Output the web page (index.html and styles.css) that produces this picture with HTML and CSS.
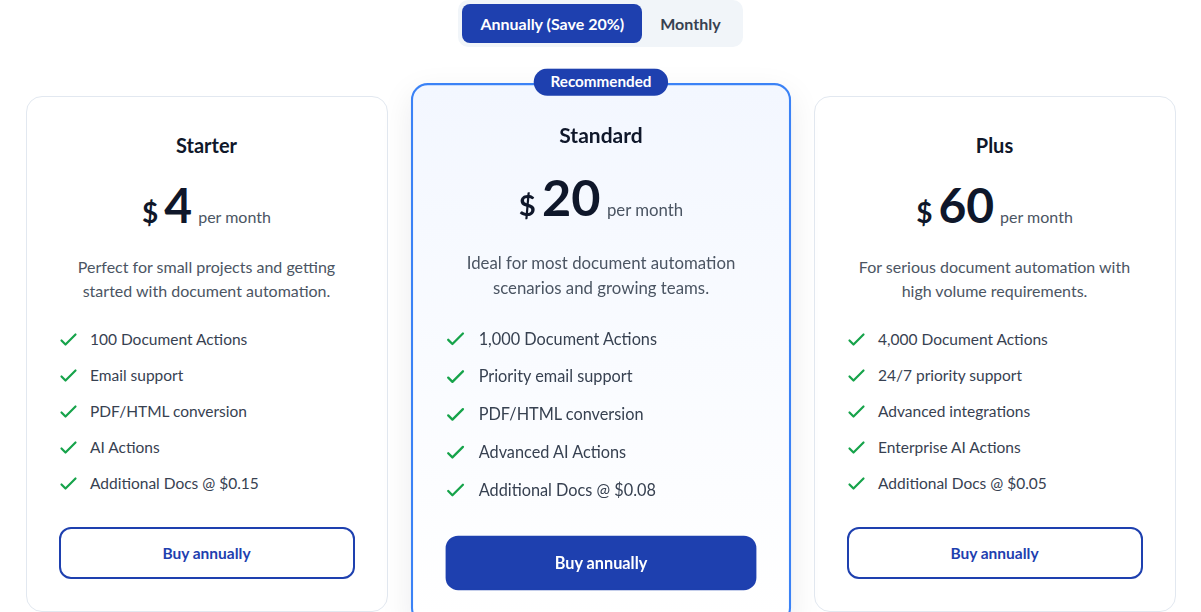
FILE: index.html
```html
<!DOCTYPE html>
<html lang="en">
<head>
<meta charset="utf-8">
<title>Pricing</title>
<link rel="stylesheet" href="styles.css">
</head>
<body>
<main class="page">
  <div class="toggle-wrap">
    <div class="toggle">
      <button class="toggle-btn is-active">Annually (Save 20%)</button>
      <button class="toggle-btn">Monthly</button>
    </div>
  </div>

  <section class="plans">
    <article class="card">
      <h3 class="plan-name">Starter</h3>
      <div class="price">
        <span class="currency">$</span>
        <span class="amount">4</span>
        <span class="period">per month</span>
      </div>
      <p class="desc">Perfect for small projects and getting started with document automation.</p>
      <ul class="features">
        <li><svg class="check" viewBox="4.5 6.5 15 11"><path d="M5 13l4 4L19 7"/></svg>100 Document Actions</li>
        <li><svg class="check" viewBox="4.5 6.5 15 11"><path d="M5 13l4 4L19 7"/></svg>Email support</li>
        <li><svg class="check" viewBox="4.5 6.5 15 11"><path d="M5 13l4 4L19 7"/></svg>PDF/HTML conversion</li>
        <li><svg class="check" viewBox="4.5 6.5 15 11"><path d="M5 13l4 4L19 7"/></svg>AI Actions</li>
        <li><svg class="check" viewBox="4.5 6.5 15 11"><path d="M5 13l4 4L19 7"/></svg>Additional Docs @ $0.15</li>
      </ul>
      <button class="buy">Buy annually</button>
    </article>

    <article class="card card-featured">
      <span class="badge">Recommended</span>
      <h3 class="plan-name">Standard</h3>
      <div class="price">
        <span class="currency">$</span>
        <span class="amount">20</span>
        <span class="period">per month</span>
      </div>
      <p class="desc">Ideal for most document automation scenarios and growing teams.</p>
      <ul class="features">
        <li><svg class="check" viewBox="4.5 6.5 15 11"><path d="M5 13l4 4L19 7"/></svg>1,000 Document Actions</li>
        <li><svg class="check" viewBox="4.5 6.5 15 11"><path d="M5 13l4 4L19 7"/></svg>Priority email support</li>
        <li><svg class="check" viewBox="4.5 6.5 15 11"><path d="M5 13l4 4L19 7"/></svg>PDF/HTML conversion</li>
        <li><svg class="check" viewBox="4.5 6.5 15 11"><path d="M5 13l4 4L19 7"/></svg>Advanced AI Actions</li>
        <li><svg class="check" viewBox="4.5 6.5 15 11"><path d="M5 13l4 4L19 7"/></svg>Additional Docs @ $0.08</li>
      </ul>
      <button class="buy buy-primary">Buy annually</button>
    </article>

    <article class="card">
      <h3 class="plan-name">Plus</h3>
      <div class="price">
        <span class="currency">$</span>
        <span class="amount">60</span>
        <span class="period">per month</span>
      </div>
      <p class="desc">For serious document automation with high volume requirements.</p>
      <ul class="features">
        <li><svg class="check" viewBox="4.5 6.5 15 11"><path d="M5 13l4 4L19 7"/></svg>4,000 Document Actions</li>
        <li><svg class="check" viewBox="4.5 6.5 15 11"><path d="M5 13l4 4L19 7"/></svg>24/7 priority support</li>
        <li><svg class="check" viewBox="4.5 6.5 15 11"><path d="M5 13l4 4L19 7"/></svg>Advanced integrations</li>
        <li><svg class="check" viewBox="4.5 6.5 15 11"><path d="M5 13l4 4L19 7"/></svg>Enterprise AI Actions</li>
        <li><svg class="check" viewBox="4.5 6.5 15 11"><path d="M5 13l4 4L19 7"/></svg>Additional Docs @ $0.05</li>
      </ul>
      <button class="buy">Buy annually</button>
    </article>
  </section>
</main>
</body>
</html>
```

FILE: styles.css
```css
* { box-sizing: border-box; }

html, body {
  margin: 0;
  padding: 0;
  background: #ffffff;
}

body {
  font-family: Lato, "Noto Sans", sans-serif;
  color: #0f172a;
  overflow: hidden;
}

.page {
  width: 1150px;
  margin: 0 auto;
}

.toggle-wrap {
  display: flex;
  justify-content: center;
}

.toggle {
  display: flex;
  padding: 4px;
  background: #f1f5f9;
  border-radius: 10px;
}

.toggle-btn {
  font-family: inherit;
  font-size: 16px;
  font-weight: 700;
  line-height: 23px;
  padding: 8px 18px;
  border: 0;
  border-radius: 8px;
  background: transparent;
  color: #374151;
}

.toggle-btn.is-active {
  background: #1e40af;
  color: #ffffff;
}

.plans {
  display: grid;
  grid-template-columns: repeat(3, 1fr);
  gap: 32px;
  margin-top: 49px;
}

.card {
  position: relative;
  display: flex;
  flex-direction: column;
  align-items: center;
  padding: 32px;
  border: 1px solid #e2e8f0;
  border-radius: 16px;
  background: #ffffff;
}

.card-featured {
  border: 2px solid #3b82f6;
  padding: 31px;
  background: linear-gradient(180deg, #f3f7ff 0%, #ffffff 100%);
  transform: scale(1.05);
  box-shadow: 0 10px 30px rgba(15, 23, 42, 0.08);
  z-index: 1;
}

.badge {
  position: absolute;
  top: -3px;
  left: 50%;
  transform: translate(-50%, -50%);
  padding: 3px 16px;
  border-radius: 999px;
  background: #1e40af;
  color: #ffffff;
  font-size: 14.5px;
  font-weight: 700;
  line-height: 20px;
  white-space: nowrap;
}

.plan-name {
  margin: 0;
  font-size: 20px;
  line-height: 32px;
  font-weight: 700;
  color: #0f172a;
}

.price {
  display: flex;
  align-items: baseline;
  gap: 6px;
  margin-top: 20px;
  color: #0f172a;
}

.currency {
  font-size: 28px;
  font-weight: 700;
}

.amount {
  font-size: 48px;
  font-weight: 700;
  line-height: 48px;
}

.period {
  font-size: 16px;
  color: #4b5563;
}

.desc {
  margin: 26px 0 0;
  text-align: center;
  font-size: 16px;
  line-height: 24px;
  color: #4b5563;
}

.features {
  align-self: stretch;
  list-style: none;
  margin: 24px 0 0;
  padding: 0;
  display: flex;
  flex-direction: column;
  gap: 12px;
}

.features li {
  display: flex;
  align-items: center;
  gap: 14.5px;
  padding-left: 2px;
  font-size: 15.5px;
  line-height: 24px;
  color: #374151;
}

.check {
  width: 15px;
  height: 11px;
  flex: none;
  overflow: visible;
  fill: none;
  stroke: #16a34a;
  stroke-width: 2.2;
  stroke-linecap: round;
  stroke-linejoin: round;
}

.buy {
  align-self: stretch;
  margin-top: 32px;
  padding: 12px 0;
  font-family: inherit;
  font-size: 15.5px;
  font-weight: 700;
  line-height: 24px;
  border: 2px solid #1e40af;
  border-radius: 12px;
  background: #ffffff;
  color: #1e40af;
}

.buy-primary {
  background: #1e40af;
  color: #ffffff;
}
```
